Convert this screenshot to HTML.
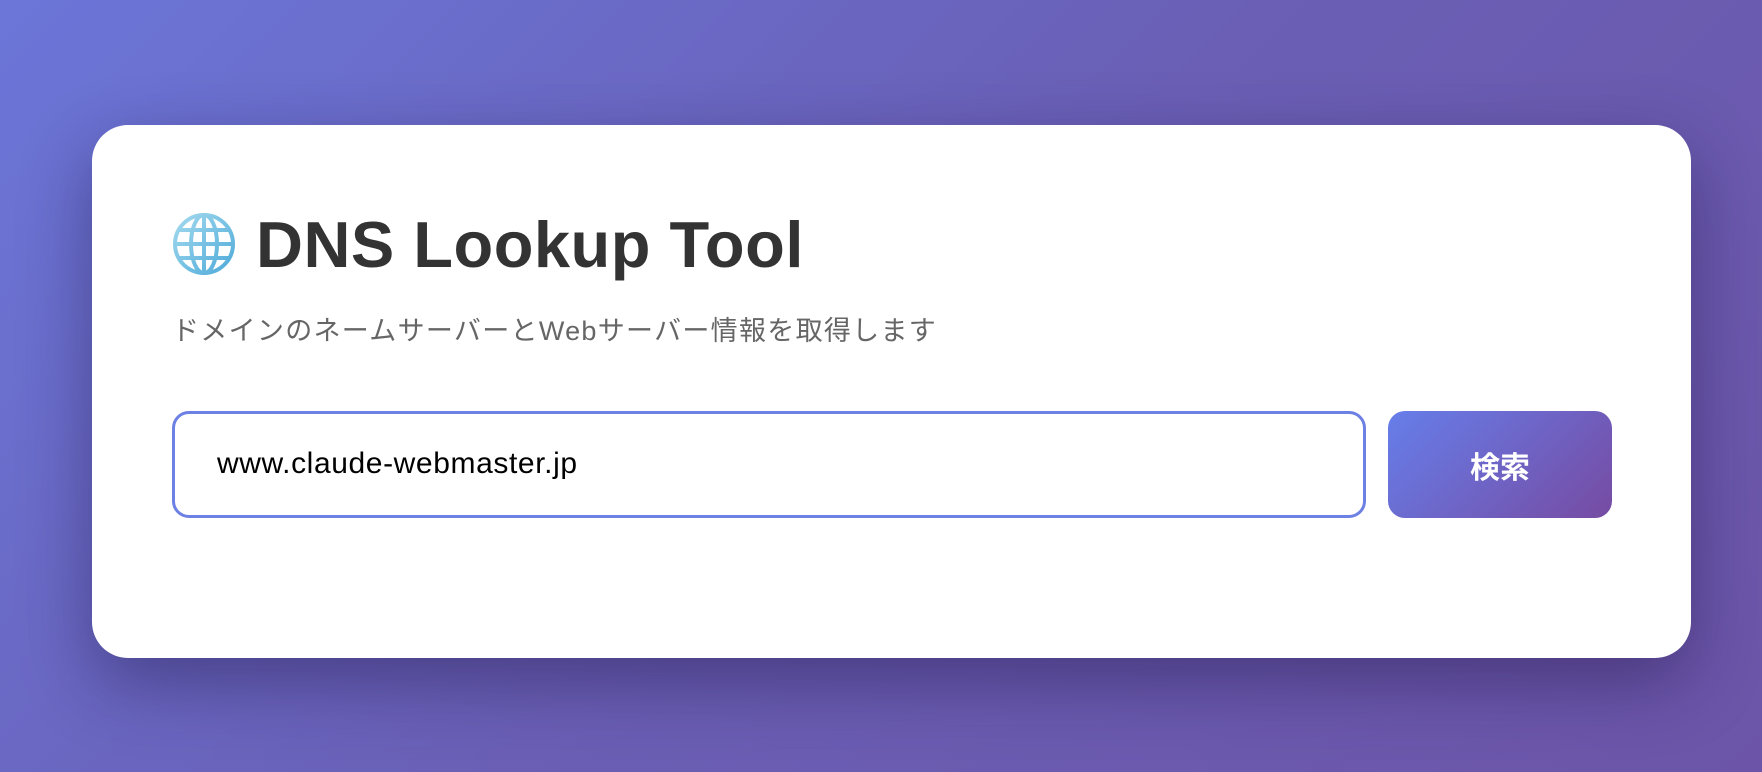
<!DOCTYPE html>
<html><head><meta charset="utf-8"><style>
html,body{margin:0;padding:0;width:1762px;height:772px;overflow:hidden}
body{background:linear-gradient(135deg,#6b76d8 0%,#6a5fb5 50%,#6c55a8 100%);font-family:"Liberation Sans","Noto Sans CJK JP",sans-serif;position:relative}
.card{position:absolute;left:92px;top:125px;width:1599px;height:533px;background:#fff;border-radius:36px;box-shadow:0 25px 70px rgba(30,20,70,0.45)}
.globe{position:absolute;left:172px;top:212px;width:64px;height:64px}
h1{position:absolute;left:256px;top:200px;margin:0;font-size:65px;font-weight:bold;color:#333;line-height:90px;white-space:nowrap;letter-spacing:0.5px}
.sub{position:absolute;left:172px;top:313px;font-size:27px;color:#666;white-space:nowrap;line-height:36px;letter-spacing:1.3px}
.inp{position:absolute;left:172px;top:411px;width:1188px;height:101px;border:3px solid #6d80e4;border-radius:17px}
.inp span{position:absolute;left:42px;top:33px;font-size:30px;color:#000;line-height:34px;letter-spacing:0.6px}
.btn{position:absolute;left:1388px;top:411px;width:224px;height:107px;border-radius:17px;background:linear-gradient(135deg,#667eea,#764ba2);color:#fff;font-weight:bold;font-size:30px;display:flex;align-items:center;justify-content:center}
</style></head><body>
<div class="card"></div>
<svg class="globe" viewBox="0 0 64 64">
<defs><linearGradient id="g" gradientUnits="userSpaceOnUse" x1="0" y1="0" x2="64" y2="64"><stop offset="0" stop-color="#a8dcf0"/><stop offset="1" stop-color="#4aa8d8"/></linearGradient></defs>
<g fill="none" stroke="url(#g)" stroke-width="4">
<circle cx="32" cy="32" r="29"/>
<ellipse cx="32" cy="32" rx="13" ry="29"/>
<line x1="32" y1="3" x2="32" y2="61"/>
<line x1="3" y1="32" x2="61" y2="32"/>
<line x1="7" y1="18" x2="57" y2="18"/>
<line x1="7" y1="46" x2="57" y2="46"/>
</g></svg>
<h1>DNS Lookup Tool</h1>
<div class="sub">ドメインのネームサーバーとWebサーバー情報を取得します</div>
<div class="inp"><span>www.claude-webmaster.jp</span></div>
<div class="btn">検索</div>
</body></html>
